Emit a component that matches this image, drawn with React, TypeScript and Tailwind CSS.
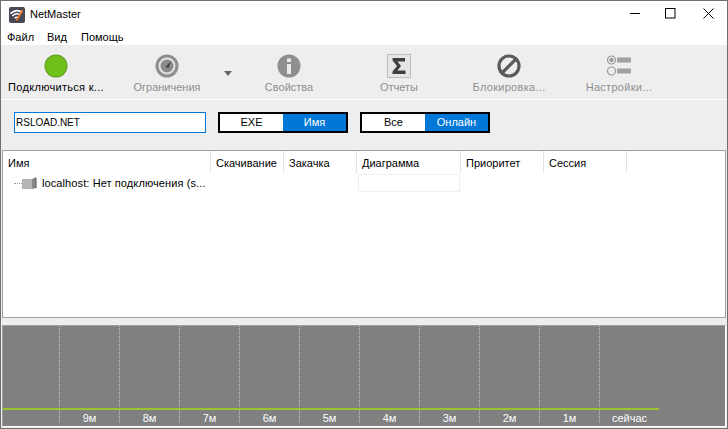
const font = "font-['Liberation_Sans',sans-serif]";

const columns = [
  { label: "Имя", width: "w-[208px]" },
  { label: "Скачивание", width: "w-[73px]" },
  { label: "Закачка", width: "w-[73px]" },
  { label: "Диаграмма", width: "w-[104px]" },
  { label: "Приоритет", width: "w-[83px]" },
  { label: "Сессия", width: "w-[83px]" },
];

const ticks = ["9м", "8м", "7м", "6м", "5м", "4м", "3м", "2м", "1м", "сейчас"];

function AppIcon() {
  return (
    <svg width="16" height="16" viewBox="0 0 17 17" className="shrink-0">
      <rect width="17" height="17" rx="2" fill="#4a4754" />
      <path d="M1.5 7 Q8 1.5 14 6" stroke="#fff" strokeWidth="1.8" fill="none" />
      <path d="M3.5 9.5 Q8 5.5 12 8.5" stroke="#fff" strokeWidth="1.6" fill="none" />
      <path d="M6 12 Q8 10 10 11.5" stroke="#fff" strokeWidth="1.5" fill="none" />
      <path d="M8 14.5 L14.5 3" stroke="#f0762a" strokeWidth="1.8" />
    </svg>
  );
}

function GreenDot() {
  return (
    <svg width="24" height="24" viewBox="0 0 24 24">
      <circle cx="12" cy="12" r="11.5" fill="#5f9e1e" />
      <circle cx="12" cy="12" r="10.5" fill="#6fc01a" />
    </svg>
  );
}

function Gauge() {
  return (
    <svg width="24" height="24" viewBox="0 0 24 24">
      <circle cx="12" cy="12" r="11.5" fill="#8e8e8e" />
      <circle cx="12" cy="12" r="8.5" fill="#e4e4e4" />
      <circle cx="12" cy="12" r="6.5" fill="#8a8a8a" />
      <path d="M10.5 13 L16 7 L13.5 14 Z" fill="#3f3f3f" />
    </svg>
  );
}

function Info() {
  return (
    <svg width="24" height="24" viewBox="0 0 24 24">
      <circle cx="12" cy="12" r="11.5" fill="#8f8f8f" />
      <rect x="10" y="4.5" width="4" height="3.5" fill="#ececec" />
      <rect x="10" y="10" width="4" height="10" fill="#ececec" />
    </svg>
  );
}

function Sigma() {
  return (
    <svg width="24" height="24" viewBox="0 0 24 24">
      <rect x="0.5" y="0.5" width="23" height="23" fill="#e6e6e6" stroke="#bdbdbd" />
      <path d="M5.5 4 H18 V7.5 H10.5 L14 12 L10.5 16.5 H18.5 V20 H5.5 V17.5 L10 12 L5.5 6.5 Z" fill="#3f3f3f" />
    </svg>
  );
}

function Block() {
  return (
    <svg width="24" height="24" viewBox="0 0 24 24">
      <circle cx="12" cy="12" r="10" fill="none" stroke="#5a5a5a" strokeWidth="3.2" />
      <path d="M5 19 L19 5" stroke="#5a5a5a" strokeWidth="3.2" />
    </svg>
  );
}

function Options() {
  return (
    <svg width="24" height="22" viewBox="0 0 24 22">
      <circle cx="4.5" cy="5" r="4" fill="#eee" stroke="#9a9a9a" strokeWidth="1.2" />
      <circle cx="4.5" cy="5" r="2.2" fill="#9a9a9a" />
      <rect x="10" y="2.5" width="14" height="5" fill="#a0a0a0" />
      <circle cx="4.5" cy="16" r="4" fill="#eee" stroke="#9a9a9a" strokeWidth="1.2" />
      <rect x="10" y="13.5" width="14" height="5" fill="#a0a0a0" />
    </svg>
  );
}

function ToolButton({ icon, label, active, wide }: { icon: React.ReactNode; label: string; active?: boolean; wide?: boolean }) {
  return (
    <div className="w-[110px] shrink-0 flex flex-col items-center">
      <div className="h-[24px] flex items-center justify-center">{icon}</div>
      <div className={`mt-[2px] text-[11px] leading-[14px] whitespace-nowrap ${wide ? "tracking-[0.3px]" : ""} ${active ? "text-black" : "text-[#8f8f8f]"}`}>{label}</div>
    </div>
  );
}

function Segment({ left, right, rightOn }: { left: string; right: string; rightOn?: boolean }) {
  return (
    <div className="w-[130px] h-[21px] border-2 border-black flex text-[11px] leading-[17px] text-center">
      <div className="w-[63px] bg-white text-black">{left}</div>
      <div className={`flex-1 ${rightOn ? "bg-[#0078d7] text-white" : "bg-white text-black"}`}>{right}</div>
    </div>
  );
}

export default function App() {
  return (
    <div className={`${font} w-[728px] h-[429px] overflow-hidden bg-[#eeeeee] border border-[#707070] flex flex-col text-black`}>
      {/* title bar */}
      <div className="h-[29px] bg-white flex items-center shrink-0">
        <div className="ml-[8px] mt-[-2px]"><AppIcon /></div>
        <span className="ml-[5px] text-[11px] mt-[-2px]">NetMaster</span>
        <div className="ml-auto flex items-center">
          <svg width="11" height="11" viewBox="0 0 11 11" className="mr-[24px] mt-[-4px]">
            <path d="M0 5.5 H10" stroke="#000" />
          </svg>
          <svg width="11" height="11" viewBox="0 0 11 11" className="mr-[27px] mt-[-4px]">
            <rect x="0.5" y="0.5" width="9.5" height="9.5" fill="none" stroke="#000" />
          </svg>
          <svg width="11" height="11" viewBox="0 0 11 11" className="mr-[13px] mt-[-4px]">
            <path d="M0.5 0.5 L10.5 10.5 M10.5 0.5 L0.5 10.5" stroke="#000" />
          </svg>
        </div>
      </div>

      {/* menu */}
      <div className="h-[15px] bg-white flex items-center text-[11px] leading-[15px] shrink-0 pl-[6px]">
        <span className="w-[40px]">Файл</span>
        <span className="w-[34px]">Вид</span>
        <span>Помощь</span>
      </div>

      {/* toolbar */}
      <div className="h-[45px] shrink-0 flex items-start pt-[9px] border-b border-white box-content">
        <ToolButton icon={<GreenDot />} label="Подключиться к..." active wide />
        <div className="w-[1px]" />
        <ToolButton icon={<Gauge />} label="Ограничения" />
        <div className="w-[12px] shrink-0 flex justify-center pt-[17px]">
          <svg width="8" height="5" viewBox="0 0 8 5"><path d="M0 0 H8 L4 5 Z" fill="#666" /></svg>
        </div>
        <ToolButton icon={<Info />} label="Свойства" />
        <ToolButton icon={<Sigma />} label="Отчеты" />
        <ToolButton icon={<Block />} label="Блокировка..." wide />
        <ToolButton icon={<Options />} label="Настройки..." wide />
      </div>

      {/* filter row */}
      <div className="h-[50px] shrink-0 flex items-start pt-[12px] pl-[13px]">
        <div className="w-[192px] h-[21px] bg-white border border-[#0078d7] text-[10px] leading-[19px] pl-[1px]">RSLOAD.NET</div>
        <div className="ml-[12px]"><Segment left="EXE" right="Имя" rightOn /></div>
        <div className="ml-[12px]"><Segment left="Все" right="Онлайн" rightOn /></div>
      </div>

      {/* list */}
      <div className="h-[168px] shrink-0 mx-[1px] bg-white border border-[#a0a0a0]">
        <div className="h-[22px] flex text-[11px] leading-[24px]">
          {columns.map(c => (
            <div key={c.label} className={`${c.width} shrink-0 border-r border-[#e3e3e3] pl-[5px] whitespace-nowrap overflow-hidden`}>{c.label}</div>
          ))}
        </div>
        <div className="h-[18px] mt-[1px] flex items-center text-[11px]">
          <div className="w-[355px] shrink-0 flex items-center pl-[11px]">
            <div className="w-[8px] border-t border-dotted border-[#999]" />
            <svg width="16" height="14" viewBox="0 0 16 14">
              <rect x="0" y="3" width="10" height="10" fill="#b4b4b4" />
              <path d="M10 3 L14 1 V12 L10 13 Z" fill="#8a8a8a" />
              <path d="M14 2 V12" stroke="#555" />
            </svg>
            <span className="ml-[4px] whitespace-nowrap tracking-[0.1px]">localhost: Нет подключения (s...</span>
          </div>
          <div className="w-[102px] h-[18px] border border-[#efefef]" />
        </div>
      </div>

      <div className="h-[7px] shrink-0" />

      {/* chart */}
      <div className="relative h-[102px] shrink-0 mx-[1px] bg-[#808080] border border-t-[#a0a0a0] border-l-[#a0a0a0] border-r-white border-b-white flex pl-[56px]">
        {ticks.map(t => (
          <div key={t} className="w-[60px] shrink-0 h-[97px] border-l border-dotted border-[#c8c8c8] relative">
            <span className="absolute left-0 right-0 bottom-[-2px] text-center text-[11px] leading-[14px] text-white">{t}</span>
          </div>
        ))}
        <div className="absolute left-0 top-[82px] w-[656px] h-[2px] bg-[#9ac32f]" />
      </div>
    </div>
  );
}
